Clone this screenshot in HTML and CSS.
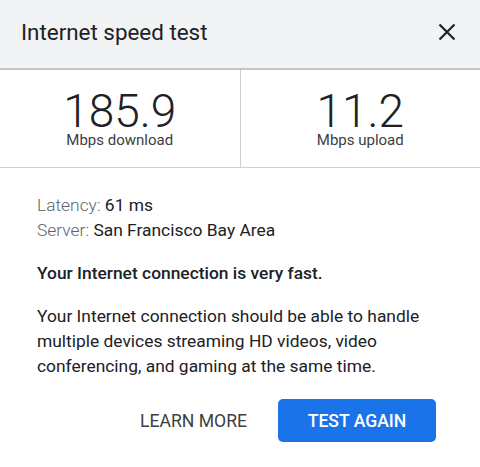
FILE: index.html
```html
<!DOCTYPE html>
<html lang="en">
<head>
  <meta charset="UTF-8">
  <meta name="viewport" content="width=device-width, initial-scale=1.0">
  <title>Internet speed test</title>
  <link rel="stylesheet" href="styles.css">
</head>
<body>
  <div class="dialog">
    <div class="header">
      <h1>Internet speed test</h1>
      <button class="close" aria-label="Close">
        <svg width="18" height="18" viewBox="0 0 18 18">
          <path d="M1.5 1.5 L16.5 16.5 M16.5 1.5 L1.5 16.5" stroke="#202124" stroke-width="2.2" fill="none"/>
        </svg>
      </button>
    </div>

    <div class="stats">
      <div class="stat">
        <div class="value">185.9</div>
        <div class="unit">Mbps download</div>
      </div>
      <div class="stat">
        <div class="value">11.2</div>
        <div class="unit">Mbps upload</div>
      </div>
    </div>

    <div class="content">
      <div class="info">
        <div><span class="label">Latency:</span> 61 ms</div>
        <div><span class="label">Server:</span> San Francisco Bay Area</div>
      </div>
      <p class="verdict">Your Internet connection is very fast.</p>
      <p class="desc">Your Internet connection should be able to handle multiple devices streaming HD videos, video conferencing, and gaming at the same time.</p>
    </div>

    <div class="actions">
      <button class="text-btn">LEARN MORE</button>
      <button class="primary">TEST AGAIN</button>
    </div>
  </div>
</body>
</html>
```

FILE: styles.css
```css
body {
  margin: 0;
  font-family: Roboto, "Liberation Sans", sans-serif;
  background: #fff;
  color: #202124;
}
.dialog {
  width: 480px;
}
.header {
  display: flex;
  align-items: center;
  justify-content: space-between;
  height: 64px;
  padding: 0 24px 4px 21px;
  background: #f1f3f4;
  border-bottom: 2px solid #c4c4c4;
}
.header h1 {
  margin: 0;
  font-size: 22.4px;
  font-weight: 400;
}
.close {
  background: none;
  border: none;
  padding: 0;
  display: flex;
}
.stats {
  display: flex;
  border-bottom: 1px solid #d0d0d0;
}
.stat {
  flex: 1;
  text-align: center;
  padding: 21px 0 18px;
}
.stat + .stat {
  border-left: 1px solid #d0d0d0;
}
.value {
  font-size: 46px;
  font-weight: 300;
  line-height: 40px;
}
.unit {
  font-size: 15px;
  color: #3c4043;
  line-height: 17px;
  margin-top: 1px;
}
.content {
  padding: 25px 37px 0;
  font-size: 17.4px;
  line-height: 25px;
}
.label {
  font-weight: 300;
  color: #5f6368;
}
.verdict {
  margin: 18px 0 0;
  font-weight: 500;
}
.desc {
  margin: 18px 0 0;
}
.actions {
  display: flex;
  justify-content: flex-end;
  align-items: center;
  gap: 31px;
  padding: 20px 44px 0 0;
}
button {
  font-family: inherit;
  cursor: pointer;
}
.text-btn {
  background: none;
  border: none;
  font-size: 17.6px;
  color: #3c4043;
  font-weight: 400;
  padding: 0;
}
.primary {
  background: #1a73e8;
  color: #fff;
  border: none;
  border-radius: 5px;
  width: 158px;
  height: 43px;
  font-size: 17.6px;
  font-weight: 500;
}
```
